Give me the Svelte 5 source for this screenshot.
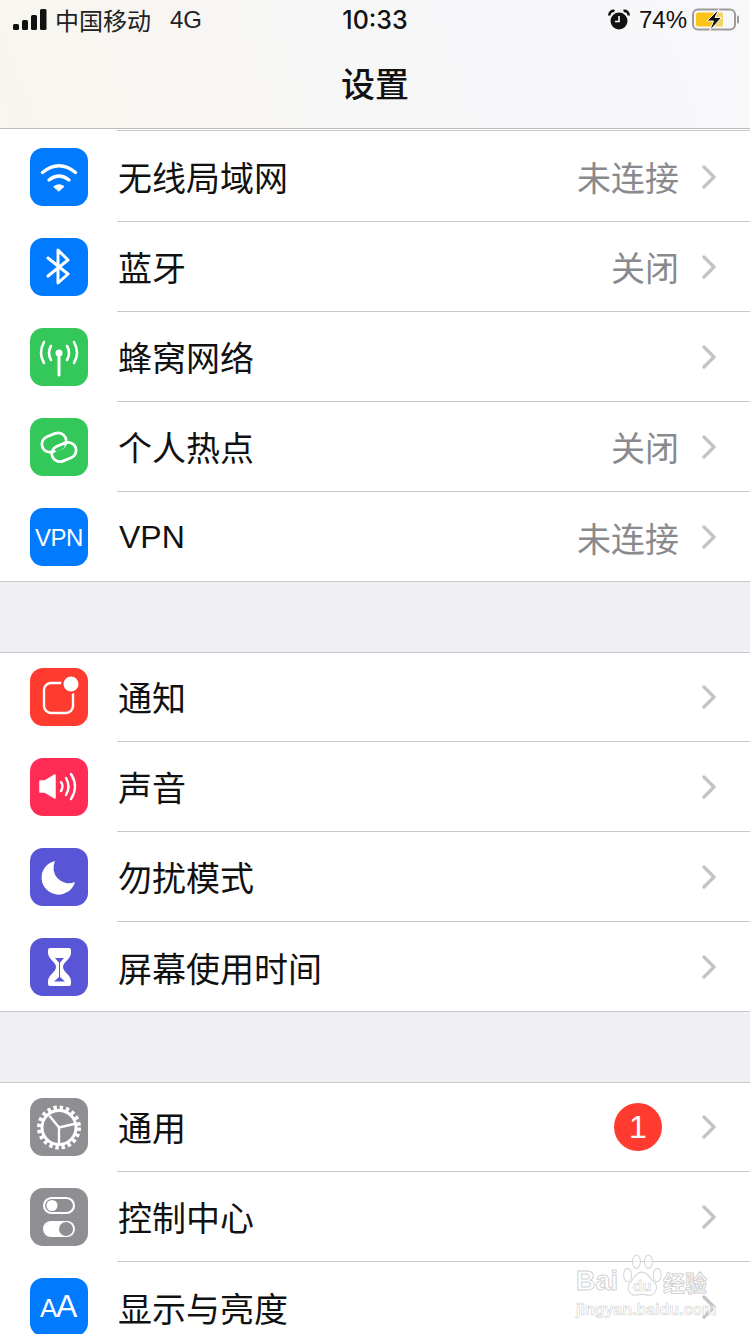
<script>
  const sections = [
    [
      { icon: 'wifi', color: '#007aff', label: '无线局域网', value: '未连接' },
      { icon: 'bluetooth', color: '#007aff', label: '蓝牙', value: '关闭' },
      { icon: 'cell', color: '#34c759', label: '蜂窝网络' },
      { icon: 'hotspot', color: '#34c759', label: '个人热点', value: '关闭' },
      { icon: 'vpn', color: '#007aff', label: 'VPN', value: '未连接', latin: true }
    ],
    [
      { icon: 'notify', color: '#ff3b30', label: '通知' },
      { icon: 'sound', color: '#ff2d55', label: '声音' },
      { icon: 'moon', color: '#5856d6', label: '勿扰模式' },
      { icon: 'hourglass', color: '#5856d6', label: '屏幕使用时间' }
    ],
    [
      { icon: 'gear', color: '#8e8e93', label: '通用', badge: 1 },
      { icon: 'toggles', color: '#8e8e93', label: '控制中心' },
      { icon: 'aa', color: '#007aff', label: '显示与亮度' }
    ]
  ];
</script>

{#snippet glyph(name, color)}
  <svg viewBox="0 0 58 58" width="58" height="58" fill="none" stroke="#fff" stroke-linecap="round" stroke-linejoin="round">
    {#if name === 'wifi'}
      <path d="M12.500 24.500Q29 11 45.500 24.500" stroke-width="3.400" />
      <path d="M19 32Q29 24 39 32" stroke-width="3.400" />
      <path d="M24 38.500Q29 35 34 38.500L29 43Z" fill="#fff" stroke-width="1" />
    {:else if name === 'bluetooth'}
      <path d="M18 20L38 36L28 45V12L38 22L18 38" stroke-width="3" />
    {:else if name === 'cell'}
      <path d="M29 26V47" stroke-width="3" />
      <circle cx="29" cy="25" r="3.500" fill="#fff" stroke="none" />
      <path d="M14 14Q8 25 14 35M44 14Q50 25 44 35" stroke-width="2.600" />
      <path d="M21 18Q17 25 21 32M37 18Q41 25 37 32" stroke-width="2.600" />
    {:else if name === 'hotspot'}
      <rect x="11.500" y="16.500" width="25" height="16" rx="8" transform="rotate(-22 24 24.500)" stroke-width="2.800" />
      <path d="M27 31L32 28" stroke={color} stroke-width="5" />
      <rect x="21.500" y="26" width="25" height="16" rx="8" transform="rotate(-22 34 34)" stroke-width="2.800" />
      <path d="M29 21.500L33 19.500" stroke={color} stroke-width="0" />
    {:else if name === 'vpn'}
      <text x="29" y="38" text-anchor="middle" class="ico-text vpn" fill="#fff" stroke="none">VPN</text>
    {:else if name === 'notify'}
      <rect x="14" y="15" width="29" height="30" rx="7" stroke-width="2.400" />
      <circle cx="41" cy="16" r="10" fill={color} stroke="none" />
      <circle cx="41" cy="16" r="7.500" fill="#fff" stroke="none" />
    {:else if name === 'sound'}
      <path d="M10 23H15L25 17V40L15 34H10Z" fill="#fff" stroke-width="1.500" />
      <path d="M31 24Q34 28.500 31 33" stroke-width="2.400" />
      <path d="M36 20Q41 28.500 36 37" stroke-width="2.400" />
      <path d="M41 16Q49 28.500 41 41" stroke-width="2.400" />
    {:else if name === 'moon'}
      <path d="M25 13A17 17 0 1 0 45 34A15.500 15.500 0 0 1 25 13Z" fill="#fff" stroke="none" />
    {:else if name === 'hourglass'}
      <path d="M20 10H39a2 2 0 0 1 2 2v3c0 6-8 9-8 14c0 5 8 8 8 14v3a2 2 0 0 1-2 2H20a2 2 0 0 1-2-2v-3c0-6 8-9 8-14c0-5-8-8-8-14v-3a2 2 0 0 1 2-2z" fill="#fff" stroke="none" />
      <path d="M25 20H34L30 24.500V39L35 43.500H24L29 39V24.500Z" fill={color} stroke="none" />
    {:else if name === 'gear'}
      <circle cx="29" cy="29.500" r="17" stroke-width="3" />
      <circle cx="29" cy="29.500" r="19.600" stroke-width="4.800" stroke-dasharray="3.400 2.760" stroke-linecap="butt" />
      <path d="M29 29.500L20 18.500M29 29.500L44 26M29 29.500L29 46" stroke-width="2.400" />
    {:else if name === 'toggles'}
      <rect x="14" y="10" width="30" height="15" rx="7.500" stroke-width="2.200" />
      <circle cx="22" cy="17.500" r="5.500" fill="#fff" stroke="none" />
      <rect x="13" y="33" width="32" height="16" rx="8" fill="#fff" stroke="none" />
      <circle cx="36" cy="41" r="7" fill={color} stroke="none" />
    {:else if name === 'aa'}
      <text x="10" y="39" class="ico-text aa-small" fill="#fff" stroke="none">A</text>
      <text x="26" y="39" class="ico-text aa-big" fill="#fff" stroke="none">A</text>
    {/if}
  </svg>
{/snippet}

<div class="screen">
  <header class="nav">
    <div class="status">
      <div class="left">
        <svg class="signal" width="34" height="22" viewBox="0 0 34 22" fill="#111">
          <rect x="0" y="15" width="6" height="6" rx="1.500" />
          <rect x="9" y="11" width="6" height="10" rx="1.500" />
          <rect x="18" y="6" width="6" height="15" rx="1.500" />
          <rect x="27" y="0" width="6.500" height="21" rx="1.500" />
        </svg>
        <span class="carrier">中国移动</span>
        <span class="net">4G</span>
      </div>
      <div class="time">10:33</div>
      <div class="right">
        <svg width="22" height="22" viewBox="0 0 22 22">
          <circle cx="11" cy="12" r="8.500" fill="#111" />
          <path d="M1.500 6.500A4 4 0 0 1 6.500 2M20.500 6.500A4 4 0 0 0 15.500 2" stroke="#111" stroke-width="2.600" fill="none" />
          <path d="M11 7V12.500H7" stroke="#fff" stroke-width="1.600" fill="none" />
        </svg>
        <span class="pct">74%</span>
        <svg class="battery" width="48" height="24" viewBox="0 0 48 24" fill="none">
          <rect x="1" y="1.500" width="42" height="20" rx="5" stroke="#9b9b97" stroke-width="2" />
          <rect x="4" y="4.500" width="19" height="14" rx="2" fill="#fcc419" />
          <rect x="22" y="4.500" width="9" height="14" rx="1" fill="#f2d566" />
          <path d="M46 8.500V14.500" stroke="#9b9b97" stroke-width="2" stroke-linecap="round" />
          <path d="M27 1L15 13H21.500L17.500 23L29.500 9.500H23Z" fill="#111" stroke="#f8f8f8" stroke-width="1" />
        </svg>
      </div>
    </div>
    <h1>设置</h1>
  </header>

  <div class="peek"></div>

  {#each sections as rows}
    <section class="group">
      {#each rows as row}
        <div class="row">
          <div class="icon" style="background:{row.color}">
            {@render glyph(row.icon, row.color)}
          </div>
          <div class="body">
            <span class="label" class:latin={row.latin}>{row.label}</span>
            {#if row.value}
              <span class="value">{row.value}</span>
            {/if}
            {#if row.badge}
              <span class="badge">{row.badge}</span>
            {/if}
            <svg class="chev" width="14" height="24" viewBox="0 0 14 24" fill="none">
              <path d="M2 2L12 12L2 22" stroke="#c4c4c7" stroke-width="3.400" stroke-linecap="round" stroke-linejoin="round" />
            </svg>
          </div>
        </div>
      {/each}
    </section>
  {/each}

  <div class="mark">
    <div class="mark-top">
      <span class="bai">Bai</span>
      <span class="paw">
        <svg width="40" height="44" viewBox="0 0 50 46" preserveAspectRatio="none" fill="rgba(255,255,255,.6)" stroke="#d6d6d6" stroke-width="1.200">
          <ellipse cx="7" cy="22" rx="5" ry="7" />
          <ellipse cx="18" cy="8" rx="5" ry="7" />
          <ellipse cx="33" cy="8" rx="5" ry="7" />
          <ellipse cx="44" cy="22" rx="5" ry="7" />
          <path d="M25 19C33 19 35 26 41 30C46 35 41 44 33 43C28 42 22 42 17 43C9 44 5 35 10 30C15 26 17 19 25 19Z" />
        </svg>
        <span class="du">du</span>
      </span>
      <span class="jy">经验</span>
    </div>
    <div class="mark-url">jingyan.baidu.com</div>
  </div>
</div>

<style>
  :global(body) {
    margin: 0;
    background: #efeff4;
  }

  .screen {
    position: relative;
    width: 750px;
    height: 1334px;
    overflow: hidden;
    background: #efeff4;
    font-family: "Noto Sans CJK SC", "Liberation Sans", sans-serif;
    color: #111;
  }

  .nav {
    height: 128px;
    border-bottom: 1px solid #bcbcbc;
    background: linear-gradient(70deg, #f8f6ee 0%, #f7f6f3 25%, #f7f7f9 60%, #f8f8fa 100%);
  }

  .status {
    display: grid;
    grid-template-columns: 1fr auto 1fr;
    align-items: center;
    height: 40px;
    padding: 0 13px;
  }

  .left {
    display: flex;
    align-items: center;
    gap: 8px;
  }

  .carrier {
    font-size: 24px;
    line-height: 40px;
    color: #222;
  }

  .net {
    margin-left: 11px;
    font-family: "Liberation Sans", sans-serif;
    font-size: 24px;
    color: #222;
  }

  .time {
    font-family: "Inter", "Liberation Sans", sans-serif;
    font-size: 25px;
    font-weight: 500;
  }

  .right {
    display: flex;
    align-items: center;
    justify-content: flex-end;
    gap: 9px;
  }

  .pct {
    font-family: "Liberation Sans", sans-serif;
    font-size: 24px;
    margin-right: -4px;
  }

  .battery {
    margin-right: -3px;
  }

  h1 {
    margin: 0;
    height: 86px;
    font-size: 34px;
    font-weight: 500;
    line-height: 86px;
    text-align: center;
  }

  .peek {
    height: 3px;
    background: #fff;
    position: relative;
  }

  .peek::after {
    content: '';
    position: absolute;
    left: 117px;
    right: 0;
    bottom: 1px;
    height: 1px;
    background: #c8c8c8;
  }

  .group {
    background: #fff;
    box-shadow: inset 0 1px #c8c8cc, inset 0 -1px #c8c8cc;
    margin-bottom: 70px;
  }

  .group:first-of-type {
    box-shadow: inset 0 -1px #c8c8cc;
  }

  .row {
    display: flex;
    align-items: center;
    height: 90px;
  }

  .icon {
    flex: none;
    width: 58px;
    height: 58px;
    margin: 0 29px 0 30px;
    border-radius: 13px;
    overflow: hidden;
  }

  .icon svg {
    display: block;
  }

  .ico-text {
    font-family: "Liberation Sans", sans-serif;
  }

  .vpn {
    font-size: 24px;
    letter-spacing: -0.5px;
  }

  .aa-small {
    font-size: 26px;
  }

  .aa-big {
    font-size: 32px;
  }

  .body {
    flex: 1;
    display: flex;
    align-items: center;
    align-self: stretch;
    padding-right: 34px;
    border-bottom: 1px solid #c8c8c8;
  }

  .row:last-child .body {
    border-bottom: none;
  }

  .label {
    flex: 1;
    padding-left: 1px;
    font-size: 34px;
    color: #111;
  }

  .label.latin {
    padding-left: 2px;
    font-family: "Liberation Sans", sans-serif;
    font-size: 32px;
  }

  .value {
    font-size: 34px;
    color: #8a8a8e;
    margin-right: 23px;
  }

  .badge {
    width: 48px;
    height: 48px;
    margin-right: 40px;
    border-radius: 50%;
    background: #ff3b30;
    color: #fff;
    font-family: "Liberation Sans", sans-serif;
    font-size: 32px;
    line-height: 48px;
    text-align: center;
  }

  .chev {
    flex: none;
  }

  .mark {
    position: absolute;
    left: 576px;
    top: 1252px;
    width: 136px;
    color: rgba(255, 255, 255, 0.85);
    font-family: "Liberation Sans", sans-serif;
    -webkit-text-stroke: 1px #d2d2d2;
  }

  .mark-top {
    display: flex;
    align-items: flex-end;
    height: 46px;
  }

  .bai {
    font-size: 27px;
    font-weight: 700;
    line-height: 34px;
    width: 46px;
  }

  .paw {
    position: relative;
    width: 40px;
    height: 44px;
  }

  .paw svg {
    display: block;
  }

  .du {
    position: absolute;
    left: 11px;
    bottom: 4px;
    font-size: 15px;
    font-weight: 700;
    -webkit-text-stroke: 0.6px #d2d2d2;
  }

  .jy {
    font-family: "Noto Sans CJK SC", sans-serif;
    font-size: 22px;
    font-weight: 700;
    line-height: 34px;
    margin-left: 1px;
    white-space: nowrap;
  }

  .mark-url {
    font-size: 16px;
    font-weight: 700;
    line-height: 24px;
    white-space: nowrap;
    -webkit-text-stroke: 0.6px #d2d2d2;
  }
</style>
